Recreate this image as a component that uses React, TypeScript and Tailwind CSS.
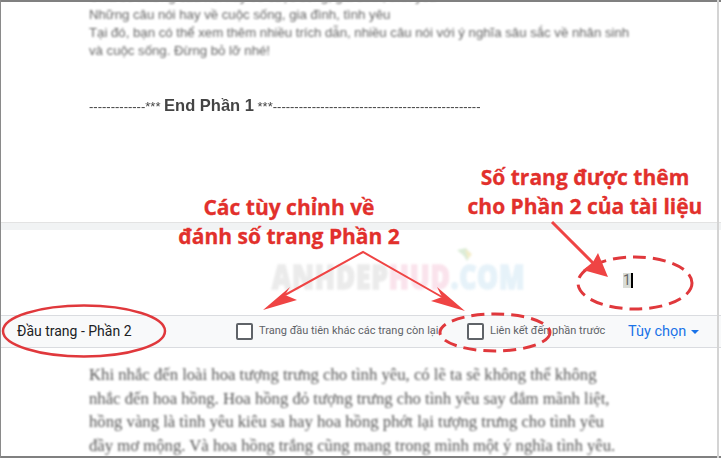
export default function App() {
  const sans = "font-['Liberation_Sans',Arial,sans-serif]";
  const label = "font-['Roboto',sans-serif] text-[11px] text-[#5f6368]";

  return (
    <div className="relative w-[721px] h-[458px] overflow-hidden bg-white">
      <div className="flex flex-col h-full border-l border-[#8a8a8a]">
        {/* Phan 1 */}
        <div className="h-[222px] shrink-0 border-t-2 border-[#808080] pl-[88px] whitespace-nowrap overflow-hidden">
          <div className={`${sans} text-[13.2px] leading-[18px] text-[#666] blur-[0.8px]`}>
            <p className="-mt-[14px]">Chia sẻ những câu nói hay về cuộc sống, gia đình, tình yêu</p>
            <p>Những câu nói hay về cuộc sống, gia đình, tình yêu</p>
            <p>Tại đó, bạn có thể xem thêm nhiều trích dẫn, nhiều câu nói với ý nghĩa sâu sắc về nhân sinh</p>
            <p>và cuộc sống. Đừng bỏ lỡ nhé!</p>
          </div>
          <p className={`${sans} mt-[36px] text-[13px] leading-[18px] text-[#444] blur-[0.6px]`}>
            -------------*** <b className="text-[16.5px]">End Phần 1</b> ***------------------------------------------------
          </p>
        </div>

        <div className="h-[8px] shrink-0 bg-[#f1f3f4] border-t border-[#e3e3e3]" />

        {/* Header */}
        <div className="relative h-[85px] shrink-0 bg-white">
          <div className="absolute left-[271px] top-[27px] origin-left scale-x-[0.8] font-['Open_Sans',sans-serif] font-extrabold text-[33px] leading-[40px] tracking-[1px] blur-[1.2px] whitespace-nowrap [-webkit-text-stroke:1.5px_currentColor]">
            <span className="text-[#ebebeb]">ANHDEP</span>
            <span className="text-[#fae3ec]">HUD</span>
            <span className="text-[#e6f2f9]">.COM</span>
          </div>
          <svg className="absolute left-[455px] top-[17px] blur-[1px]" width="18" height="16" viewBox="0 0 18 16" fill="none">
            <path d="M1 3 L10 1 L15 7 L11 14 L8 9 Z" fill="#dcecd8" />
            <path d="M9 2 L16 7 L12 12 Z" fill="#f3ecc8" />
          </svg>
          <div className="absolute left-[622px] top-[43px] flex items-center h-[15px] font-['Roboto',sans-serif] text-[14px] text-[#666]">
            <span className="bg-[#d9dcd6] leading-[15px]">1</span>
            <span className="w-[2px] h-[15px] bg-black" />
          </div>
        </div>

        {/* Toolbar */}
        <div className="flex items-center h-[33px] shrink-0 bg-[#f8f9fa] border-y border-[#dadce0] font-['Roboto',sans-serif]">
          <span className="ml-[16px] w-[219px] text-[14px] text-[#202124]">Đầu trang - Phần 2</span>
          <span className="w-[17px] h-[17px] rounded-[2px] border-2 border-[#5f6368] bg-white" />
          <span className={`ml-[6px] w-[208px] ${label}`}>Trang đầu tiên khác các trang còn lại</span>
          <span className="w-[17px] h-[17px] rounded-[2px] border-2 border-[#5f6368] bg-white" />
          <span className={`ml-[6px] w-[138px] ${label}`}>Liên kết đến phần trước</span>
          <span className="text-[14.5px] text-[#1a73e8]">Tùy chọn</span>
          <span className="ml-[5px] mt-[1px] w-0 h-0 border-x-[4px] border-x-transparent border-t-[4px] border-t-[#1a73e8]" />
        </div>

        {/* Phan 2 */}
        <div className="flex-1 pl-[88px] pt-[15px] border-b-2 border-[#808080] overflow-hidden">
          <div className="font-['Liberation_Serif',serif] text-[16.7px] leading-[23.7px] text-[#555] blur-[1.1px] whitespace-nowrap">
            <p>Khi nhắc đến loài hoa tượng trưng cho tình yêu, có lẽ ta sẽ không thể không</p>
            <p>nhắc đến hoa hồng. Hoa hồng đỏ tượng trưng cho tình yêu say đắm mãnh liệt,</p>
            <p>hồng vàng là tình yêu kiêu sa hay hoa hồng phớt lại tượng trưng cho tình yêu</p>
            <p>đầy mơ mộng. Và hoa hồng trắng cũng mang trong mình một ý nghĩa tình yêu.</p>
          </div>
        </div>
      </div>

      {/* right edge of the window */}
      <div className="absolute right-[2px] top-0 bottom-0 w-[2px] bg-[#d4d4d4]" />

      {/* Annotations */}
      <div className="absolute left-[160px] top-[193px] w-[258px] text-center font-['Open_Sans',sans-serif] font-bold text-[21px] leading-[29px] text-[#e2302c] [text-shadow:0_0_2px_#fff] [-webkit-text-stroke:0.3px_#e2302c]">
        <p>Các tùy chỉnh về</p>
        <p>đánh số trang Phần 2</p>
      </div>
      <div className="absolute left-[450px] top-[163px] w-[270px] text-center font-['Open_Sans',sans-serif] font-bold text-[21px] leading-[29px] text-[#e2302c] [text-shadow:0_0_2px_#fff] [-webkit-text-stroke:0.3px_#e2302c]">
        <p>Số trang được thêm</p>
        <p>cho Phần 2 của tài liệu</p>
      </div>

      <svg className="absolute inset-0" width="721" height="458" viewBox="0 0 721 458" fill="none">
        <ellipse cx="84" cy="331" rx="81" ry="25.5" stroke="#e0383c" strokeWidth="2.5" />
        <ellipse cx="635" cy="283" rx="57" ry="26" stroke="#e0383c" strokeWidth="3" strokeDasharray="13 7" />
        <ellipse cx="495" cy="332.5" rx="55" ry="18.5" stroke="#e0383c" strokeWidth="3" strokeDasharray="13 7" />
        <path d="M285 295 L363 252 L442 297" stroke="#ef4444" strokeWidth="2" />
        <path d="M263 310 L290 287 L285 295 L297 300 Z" fill="#ef4444" />
        <path d="M465 311 L431 301 L442 297 L437 287 Z" fill="#ef4444" />
        <path d="M552 222 L595 265" stroke="#ef4444" strokeWidth="3" />
        <path d="M608 277 L583 270 L593 262 L598 253 Z" fill="#ef4444" />
      </svg>
    </div>
  );
}
